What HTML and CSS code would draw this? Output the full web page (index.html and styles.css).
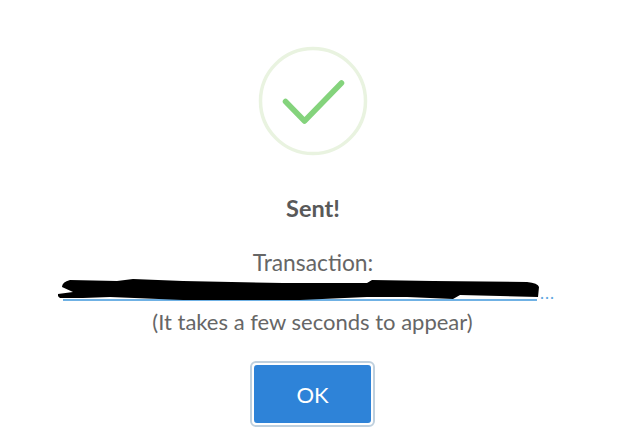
FILE: index.html
```html
<!DOCTYPE html>
<html lang="en">
<head>
<meta charset="utf-8">
<title>Sent!</title>
<link rel="stylesheet" href="styles.css">
</head>
<body>
<main class="dialog">
  <div class="icon">
    <svg class="check" viewBox="0 0 110 110" width="110" height="110" aria-hidden="true">
      <circle cx="55" cy="55" r="52.500" fill="none" stroke="#e9f3e0" stroke-width="3.500"/>
      <path d="M27.500 55.500 L46.500 75 L83.500 37" fill="none" stroke="#84d37c" stroke-width="5.500" stroke-linecap="round" stroke-linejoin="round"/>
    </svg>
  </div>
  <h2 class="title">Sent!</h2>
  <div class="body">
    <div class="label">Transaction:</div>
    <div class="link-row">
      <a class="link" href="#"></a><span class="dots">...</span>
      <svg class="scribble" viewBox="0 0 484 24" width="484" height="24" aria-hidden="true">
        <path d="M12 1 L59 2 L75 0 L125 2 L225 4 L309 4 L314 1 L375 2 L469 3 Q480 4 481 8 L480 18 L402 16 L395 20 L349 18 L309 18 L242 21 L125 21 L52 18 L25 19 L2 19 Q-1 17 0 15 L15 13 L4 8 Q4 3 12 1 Z" fill="#000"/>
      </svg>
    </div>
    <div class="note">(It takes a few seconds to appear)</div>
  </div>
  <div class="actions"><button class="ok" type="button">OK</button></div>
</main>
</body>
</html>
```

FILE: styles.css
```css
* { box-sizing: border-box; }
html, body { margin: 0; height: 100%; background: #fff; }
body { font-family: Lato, "Open Sans", sans-serif; color: #595959; overflow: hidden; }
.dialog { width: 618px; height: 446px; padding-top: 46px; display: flex; flex-direction: column; align-items: center; }
.icon { height: 110px; margin-left: 7px; }
.check { display: block; }
.title { margin: 39px 0 0 8px; font-size: 23.500px; line-height: 26px; font-weight: 700; color: #595959; }
.body { margin-top: 28px; width: 100%; display: flex; flex-direction: column; align-items: center; font-size: 22px; line-height: 26px; color: #666; }
.label { height: 26px; margin-left: 8px; font-size: 22.800px; }
.link-row { position: relative; width: 492px; height: 34px; display: flex; align-items: flex-end; padding-bottom: 8px; }
.link { display: block; width: 476px; height: 2px; background: #6fb1e4; }
.dots { color: #5fa5e0; font-size: 17px; line-height: 14px; margin-bottom: 1px; margin-left: 3px; letter-spacing: 1px; }
.scribble { position: absolute; left: -5px; top: 4px; }
.note { margin-left: 7px; }
.actions { margin-top: 26px; margin-left: 7px; padding: 2px; border: 2.500px solid #bfd0de; border-radius: 6px; }
.ok { display: block; width: 117px; height: 58px; border: 0; border-radius: 3px; background: #2e83d8; color: #fff; font: 400 22px Lato, sans-serif; padding: 0; }
```
